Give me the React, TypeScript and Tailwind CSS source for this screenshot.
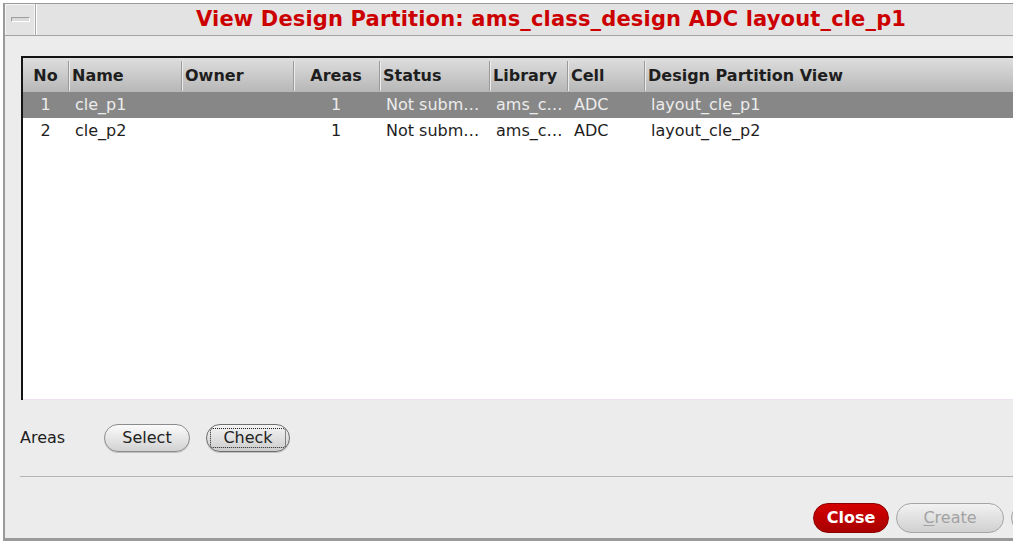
import React from 'react';

const COLS = [
  { key: 'no', label: 'No', w: 'w-[45px]', align: 'center' },
  { key: 'name', label: 'Name', w: 'w-[113px]', align: 'left' },
  { key: 'owner', label: 'Owner', w: 'w-[112px]', align: 'left' },
  { key: 'areas', label: 'Areas', w: 'w-[86px]', align: 'center' },
  { key: 'status', label: 'Status', w: 'w-[110px]', align: 'left' },
  { key: 'library', label: 'Library', w: 'w-[78px]', align: 'left' },
  { key: 'cell', label: 'Cell', w: 'w-[77px]', align: 'left' },
  { key: 'view', label: 'Design Partition View', w: 'flex-1', align: 'left' },
] as const;

const ROWS = [
  { no: '1', name: 'cle_p1', owner: '', areas: '1', status: 'Not subm…', library: 'ams_c…', cell: 'ADC', view: 'layout_cle_p1' },
  { no: '2', name: 'cle_p2', owner: '', areas: '1', status: 'Not subm…', library: 'ams_c…', cell: 'ADC', view: 'layout_cle_p2' },
];

const font = { fontFamily: '"DejaVu Sans", Verdana, sans-serif' };

export default function App() {
  return (
    <div className="w-[1013px] h-[555px] bg-white overflow-hidden pt-[3px] pl-[3px]" style={font}>
      <div className="w-[1120px] h-[538px] bg-[#ececec] border-t border-l-2 border-b-[3px] border-[#9a9a9a] flex flex-col">

        {/* title bar */}
        <div className="h-[32px] flex bg-[#e3e3e3] border-b border-[#a3a3a3] shrink-0">
          <div className="w-[31px] h-full border-r border-[#a8a8a8] shadow-[inset_-1px_0_0_#f6f6f6,inset_1px_1px_0_#f6f6f6] flex items-center justify-center">
            <div className="w-[19px] h-[5px] bg-[#dadada] border border-[#9d9d9d] border-b-white border-r-white rounded-[1px]" />
          </div>
          <div className="w-px h-full bg-white" />
          <div className="flex-1 flex items-center pl-[159px]">
            <span className="text-[21px] font-bold text-[#cc0000] leading-none whitespace-nowrap tracking-[0.16px]">
              View Design Partition: ams_class_design ADC layout_cle_p1
            </span>
          </div>
        </div>

        {/* table */}
        <div className="ml-[16px] mt-[20px] h-[344px] bg-white border-t-2 border-l-2 border-[#141414] flex flex-col">
          <div className="h-[34px] flex bg-gradient-to-b from-[#dedede] to-[#b7b7b7] shrink-0">
            {COLS.map((c, i) => (
              <div key={c.key} className={`${c.w} flex items-center h-full relative pt-[2px]`}>
                {i > 0 && (
                  <div className="absolute left-0 top-[3px] bottom-[1px] w-[2px] border-l border-[#9a9a9a] border-r border-r-[#ececec]" />
                )}
                <span
                  className={`text-[16px] font-bold text-[#1e1e1e] whitespace-nowrap ${
                    c.align === 'center' ? 'w-full text-center' : 'pl-[4px]'
                  }`}
                >
                  {c.label}
                </span>
              </div>
            ))}
          </div>
          {ROWS.map((r, ri) => (
            <div
              key={r.no}
              className={`h-[26px] flex ${ri === 0 ? 'bg-[#878787] text-[#ececec]' : 'bg-white text-[#1e1e1e]'}`}
            >
              {COLS.map((c) => (
                <div key={c.key} className={`${c.w} flex items-center h-full`}>
                  <span
                    className={`text-[16px] whitespace-nowrap ${
                      c.align === 'center' ? 'w-full text-center' : 'pl-[7px]'
                    }`}
                  >
                    {r[c.key]}
                  </span>
                </div>
              ))}
            </div>
          ))}
          <div className="flex-1" />
          <div className="h-px bg-[#ece3ee]" />
        </div>

        {/* areas row */}
        <div className="ml-[15px] mt-[24px] flex items-center h-[28px]">
          <span className="text-[16px] text-[#1e1e1e] w-[84px]">Areas</span>
          <button className="w-[86px] h-[28px] rounded-full border border-[#8c8c8c] bg-gradient-to-b from-[#fbfbfb] to-[#d2d2d2] text-[16px] text-[#222] shadow-[0_1px_0_#c0c0c0]">
            Select
          </button>
          <button className="ml-[16px] w-[84px] h-[28px] rounded-full border border-[#6e6e6e] bg-gradient-to-b from-[#f4f4f4] to-[#cdcdcd] text-[16px] text-[#222] p-[3px] shadow-[0_1px_0_#c0c0c0]">
            <span className="block w-full h-full border border-dotted border-[#222] rounded-[3px] leading-[18px]">Check</span>
          </button>
        </div>

        {/* separator */}
        <div className="ml-[15px] mt-[24px] h-px bg-[#b4b4b4]" />

        {/* bottom buttons */}
        <div className="mt-[26px] pl-[808px] flex items-center gap-[7px]">
          <button className="w-[76px] h-[30px] rounded-full bg-gradient-to-b from-[#d40000] to-[#a80000] border border-[#8a0000] text-white font-bold text-[16px]">
            Close
          </button>
          <button className="w-[108px] h-[30px] rounded-full border border-[#a5a5a5] bg-gradient-to-b from-[#f2f2f2] to-[#d0d0d0] text-[16px] text-[#a2a2a2]">
            <span className="underline underline-offset-2">C</span>reate
          </button>
          <button className="w-[90px] h-[30px] rounded-full border border-[#a5a5a5] bg-gradient-to-b from-[#f2f2f2] to-[#d0d0d0]" />
        </div>
      </div>
    </div>
  );
}
